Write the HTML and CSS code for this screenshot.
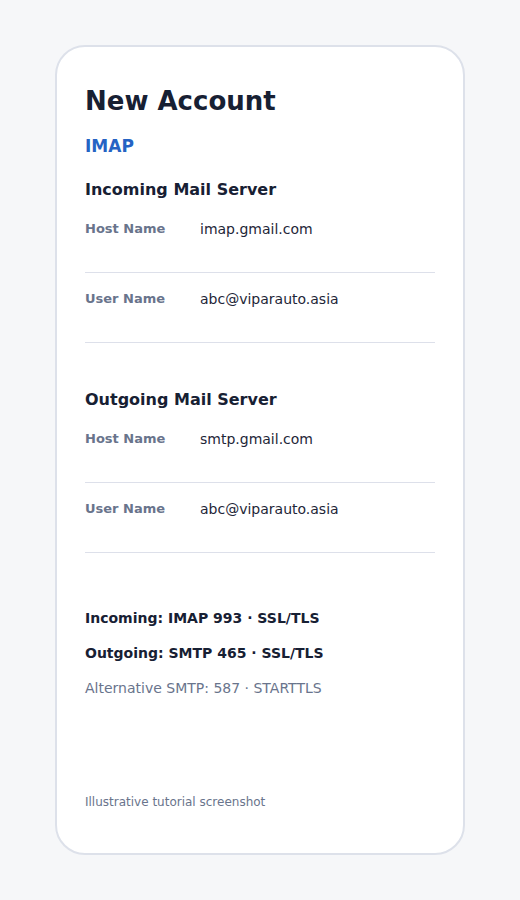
FILE: index.html
```html
<!DOCTYPE html>
<html lang="en">
<head>
<meta charset="utf-8">
<title>New Account</title>
<link rel="stylesheet" href="styles.css">
</head>
<body>
  <main class="card">
    <h1 class="title">New Account</h1>
    <div class="protocol">IMAP</div>

    <section class="server">
      <h2 class="server-title">Incoming Mail Server</h2>
      <div class="field">
        <span class="field-label">Host Name</span>
        <span class="field-value">imap.gmail.com</span>
      </div>
      <div class="field">
        <span class="field-label">User Name</span>
        <span class="field-value">abc@viparauto.asia</span>
      </div>
    </section>

    <section class="server server-next">
      <h2 class="server-title">Outgoing Mail Server</h2>
      <div class="field">
        <span class="field-label">Host Name</span>
        <span class="field-value">smtp.gmail.com</span>
      </div>
      <div class="field">
        <span class="field-label">User Name</span>
        <span class="field-value">abc@viparauto.asia</span>
      </div>
    </section>

    <div class="ports">
      <p class="port port-strong">Incoming: IMAP 993 · SSL/TLS</p>
      <p class="port port-strong">Outgoing: SMTP 465 · SSL/TLS</p>
      <p class="port port-muted">Alternative SMTP: 587 · STARTTLS</p>
    </div>

    <footer class="note">Illustrative tutorial screenshot</footer>
  </main>
</body>
</html>
```

FILE: styles.css
```css
* {
  box-sizing: border-box;
}

html, body {
  margin: 0;
  height: 100%;
}

body {
  background: #f6f7f9;
  font-family: "DejaVu Sans", "Liberation Sans", sans-serif;
  color: #172033;
  padding: 45px 55px;
}

.card {
  width: 410px;
  height: 810px;
  background: #ffffff;
  border: 2px solid #dde1ea;
  border-radius: 30px;
  padding: 37px 28px 43px;
  display: flex;
  flex-direction: column;
}

.title {
  margin: 0;
  font-size: 26px;
  line-height: 34px;
  font-weight: 700;
  color: #172033;
}

.protocol {
  margin-top: 17px;
  font-size: 17px;
  line-height: 22px;
  font-weight: 700;
  color: #2563c4;
}

.server {
  margin-top: 23px;
}

.server-next {
  margin-top: 47px;
}

.server-title {
  margin: 0 0 3px;
  font-size: 16px;
  line-height: 20px;
  font-weight: 700;
  color: #172033;
}

/* label / value row with a hairline underneath */
.field {
  display: flex;
  align-items: center;
  height: 70px;
  padding: 16px 0 33px;
  border-bottom: 1px solid #dde0ea;
  line-height: 20px;
}

.field-label {
  width: 115px;
  flex: none;
  font-size: 13px;
  font-weight: 700;
  color: #69748c;
}

.field-value {
  font-size: 14px;
  color: #1e2638;
}

.ports {
  margin-top: 55px;
  display: flex;
  flex-direction: column;
  gap: 15px;
}

.port {
  margin: 0;
  font-size: 14px;
  line-height: 20px;
}

.port-strong {
  font-weight: 700;
  color: #172033;
}

.port-muted {
  color: #69748c;
}

.note {
  margin-top: auto;
  font-size: 12px;
  line-height: 16px;
  color: #69748c;
}
```
